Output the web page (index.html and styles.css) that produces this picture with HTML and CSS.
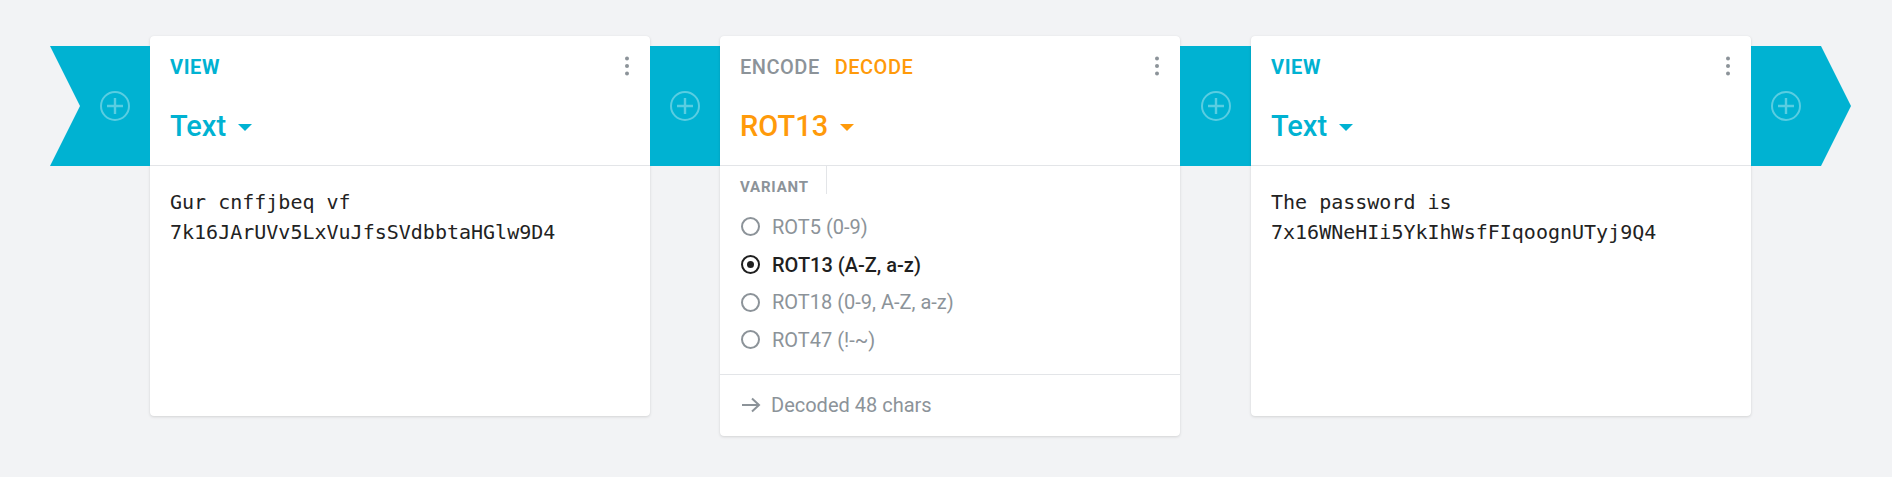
FILE: index.html
```html
<!DOCTYPE html>
<html>
<head>
<meta charset="utf-8">
<link rel="stylesheet" href="styles.css">
</head>
<body>
<div class="chain">
  <div class="seg seg-start"><span class="add"><svg viewBox="0 0 30 30" width="30" height="30"><circle cx="15" cy="15" r="14" fill="none" stroke="currentColor" stroke-width="2"/><path d="M15 7v16M7 15h16" stroke="currentColor" stroke-width="2.4" fill="none"/></svg></span></div>

  <div class="card card-wide">
    <div class="card-head">
      <div class="head-row">
        <div class="tabs"><span class="tab tab-cyan">VIEW</span></div>
        <span class="kebab"><svg viewBox="0 0 4 20" width="4" height="20"><circle cx="2" cy="2.5" r="2"/><circle cx="2" cy="10" r="2"/><circle cx="2" cy="17.5" r="2"/></svg></span>
      </div>
      <div class="title title-cyan">Text<span class="caret"></span></div>
    </div>
    <div class="card-body mono">Gur cnffjbeq vf<br>7k16JArUVv5LxVuJfsSVdbbtaHGlw9D4</div>
  </div>

  <div class="seg seg-mid"><span class="add"><svg viewBox="0 0 30 30" width="30" height="30"><circle cx="15" cy="15" r="14" fill="none" stroke="currentColor" stroke-width="2"/><path d="M15 7v16M7 15h16" stroke="currentColor" stroke-width="2.4" fill="none"/></svg></span></div>

  <div class="card card-mid">
    <div class="card-head">
      <div class="head-row">
        <div class="tabs"><span class="tab tab-grey">ENCODE</span><span class="tab tab-orange">DECODE</span></div>
        <span class="kebab"><svg viewBox="0 0 4 20" width="4" height="20"><circle cx="2" cy="2.5" r="2"/><circle cx="2" cy="10" r="2"/><circle cx="2" cy="17.5" r="2"/></svg></span>
      </div>
      <div class="title title-orange">ROT13<span class="caret"></span></div>
    </div>
    <div class="variant">
      <div class="variant-tab"><span class="variant-label">VARIANT</span></div>
      <ul class="radios">
        <li class="radio"><span class="dot"></span>ROT5 (0-9)</li>
        <li class="radio radio-on"><span class="dot"></span>ROT13 (A-Z, a-z)</li>
        <li class="radio"><span class="dot"></span>ROT18 (0-9, A-Z, a-z)</li>
        <li class="radio"><span class="dot"></span>ROT47 (!-~)</li>
      </ul>
    </div>
    <div class="card-foot"><svg class="arrow" viewBox="0 0 20 16" width="20" height="16"><path d="M1 8h17M11 1.5L18 8l-7 6.5" fill="none" stroke="currentColor" stroke-width="2"/></svg>Decoded 48 chars</div>
  </div>

  <div class="seg seg-mid seg-mid2"><span class="add"><svg viewBox="0 0 30 30" width="30" height="30"><circle cx="15" cy="15" r="14" fill="none" stroke="currentColor" stroke-width="2"/><path d="M15 7v16M7 15h16" stroke="currentColor" stroke-width="2.4" fill="none"/></svg></span></div>

  <div class="card card-wide">
    <div class="card-head">
      <div class="head-row">
        <div class="tabs"><span class="tab tab-cyan">VIEW</span></div>
        <span class="kebab"><svg viewBox="0 0 4 20" width="4" height="20"><circle cx="2" cy="2.5" r="2"/><circle cx="2" cy="10" r="2"/><circle cx="2" cy="17.5" r="2"/></svg></span>
      </div>
      <div class="title title-cyan">Text<span class="caret"></span></div>
    </div>
    <div class="card-body mono">The password is<br>7x16WNeHIi5YkIhWsfFIqoognUTyj9Q4</div>
  </div>

  <div class="seg seg-end"><span class="add"><svg viewBox="0 0 30 30" width="30" height="30"><circle cx="15" cy="15" r="14" fill="none" stroke="currentColor" stroke-width="2"/><path d="M15 7v16M7 15h16" stroke="currentColor" stroke-width="2.4" fill="none"/></svg></span></div>
</div>
</body>
</html>
```

FILE: styles.css
```css
* { box-sizing: border-box; }
html, body { margin: 0; padding: 0; }
body {
  background: #f2f3f5;
  font-family: Roboto, "Noto Sans", sans-serif;
  width: 1892px;
  height: 477px;
  overflow: hidden;
}
.chain {
  display: flex;
  align-items: flex-start;
  padding: 36px 0 0 50px;
}
.seg {
  height: 120px;
  margin-top: 10px;
  background: #00b2d2;
  display: flex;
  align-items: center;
  flex: none;
}
.add { color: rgba(255,255,255,0.35); display: flex; }
.add svg { display: block; }
.seg-start {
  width: 100px;
  justify-content: flex-end;
  padding-right: 20px;
  clip-path: polygon(0 0, 100% 0, 100% 100%, 0 100%, 30px 50%);
}
.seg-mid { width: 70px; justify-content: center; }
.seg-mid2 { width: 71px; }
.seg-end {
  width: 100px;
  padding-left: 20px;
  clip-path: polygon(0 0, 70px 0, 100% 50%, 70px 100%, 0 100%);
}
.card {
  flex: none;
  background: #fff;
  border-radius: 4px;
  box-shadow: 0 1px 3px rgba(0,0,0,0.13), 0 0 1px rgba(0,0,0,0.06);
}
.card-wide { width: 500px; }
.card-mid { width: 460px; }
.card-head {
  height: 130px;
  padding: 19px 20px 0;
  border-bottom: 1px solid #e3e5e8;
}
.head-row {
  display: flex;
  justify-content: space-between;
  align-items: center;
  height: 24px;
}
.tabs { display: flex; gap: 15px; }
.tab {
  font-size: 20px;
  line-height: 24px;
  font-weight: 500;
  letter-spacing: 0.5px;
}
.tab-cyan { color: #00b2d2; font-weight: 700; letter-spacing: 0.6px; }
.tab-grey { color: #8c9399; }
.tab-orange { color: #ff9a0a; }
.kebab { display: flex; margin-right: 1px; margin-top: -3px; }
.kebab svg { fill: #8c9399; display: block; }
.title {
  margin-top: 29px;
  font-size: 29px;
  line-height: 36px;
  font-weight: 500;
  display: flex;
  align-items: center;
}
.title-cyan { color: #00b2d2; }
.title-orange { color: #ff9a0a; }
.caret {
  width: 0;
  height: 0;
  border-left: 7px solid transparent;
  border-right: 7px solid transparent;
  border-top: 7px solid currentColor;
  margin-left: 12px;
  margin-top: 3px;
}
.card-body {
  height: 250px;
  padding: 21px 20px 0;
}
.mono {
  font-family: "DejaVu Sans Mono", monospace;
  font-size: 20px;
  line-height: 30px;
  color: #222;
}
.variant { padding-bottom: 15px; }
.variant-tab {
  display: inline-block;
  height: 28px;
  padding: 14px 17px 0 20px;
  border-right: 1px solid #e3e5e8;
}
.variant-label {
  display: block;
  font-size: 15px;
  line-height: 14px;
  font-weight: 700;
  letter-spacing: 0.8px;
  color: #8c9399;
}
.radios {
  list-style: none;
  margin: 12px 0 0;
  padding: 0 0 0 21px;
}
.radio {
  height: 37.7px;
  display: flex;
  align-items: center;
  font-size: 20px;
  color: #8c9399;
}
.dot {
  width: 19px;
  height: 19px;
  border: 2px solid #8c9399;
  border-radius: 50%;
  margin-right: 12px;
  display: flex;
  align-items: center;
  justify-content: center;
  flex: none;
}
.radio-on { color: #1f1f1f; font-weight: 500; }
.radio-on .dot { border-color: #1f1f1f; }
.radio-on .dot::after {
  content: "";
  width: 7px;
  height: 7px;
  border-radius: 50%;
  background: #1f1f1f;
}
.card-foot {
  border-top: 1px solid #e3e5e8;
  padding: 20px 20px 20px 21px;
  height: 62px;
  display: flex;
  align-items: center;
  font-size: 20px;
  line-height: 22px;
  color: #8c9399;
}
.arrow { margin-right: 10px; display: block; }
```
